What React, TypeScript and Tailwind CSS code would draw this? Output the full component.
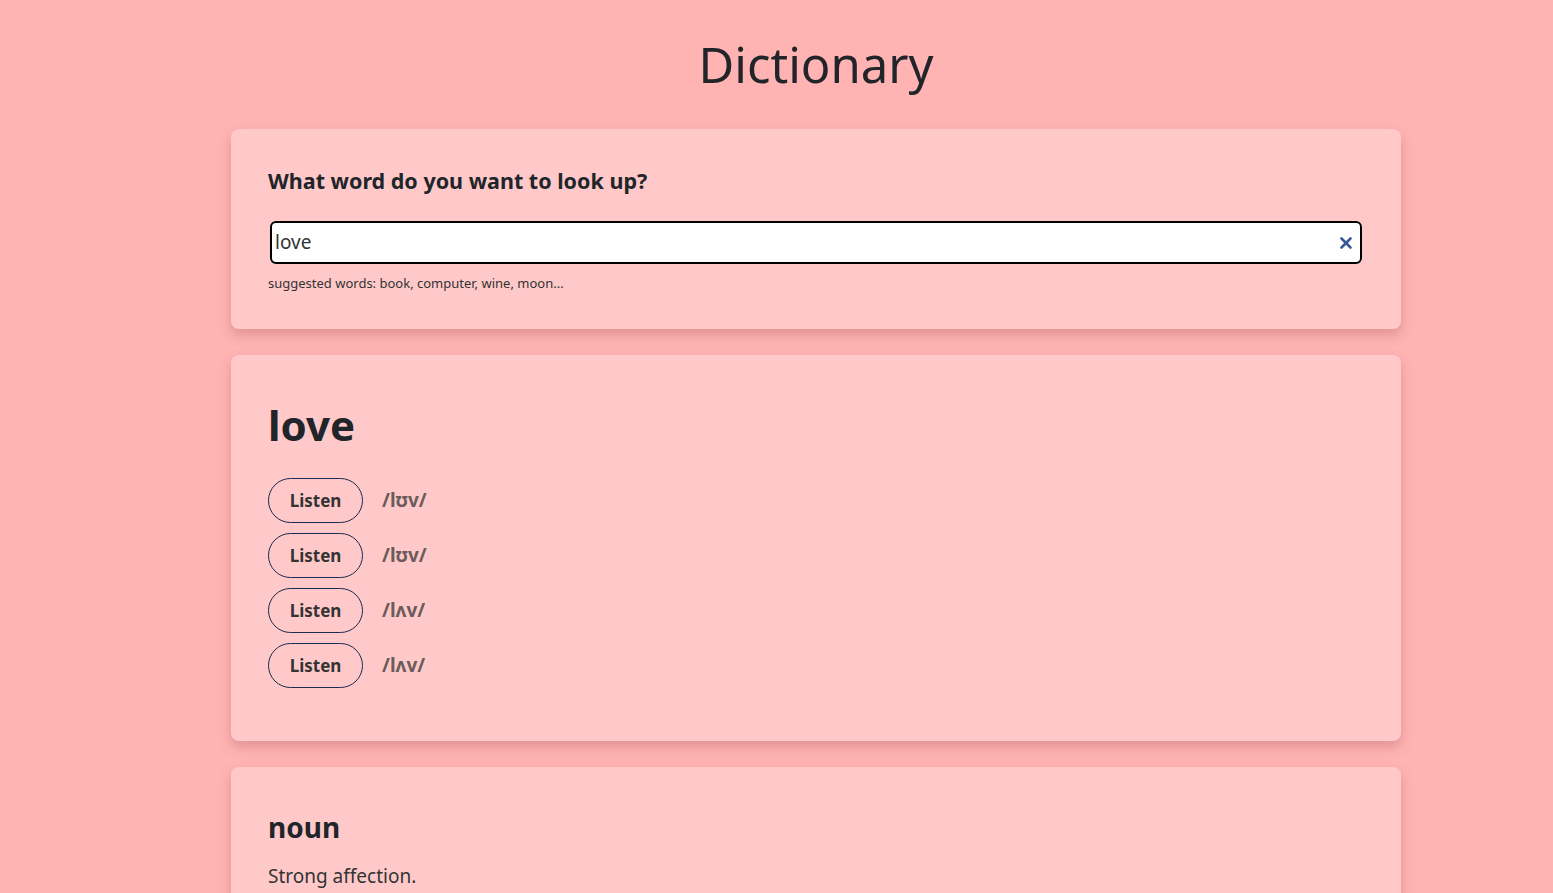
import { X } from "lucide-react";

const phonetics = ["/lʊv/", "/lʊv/", "/lʌv/", "/lʌv/"];

export default function App() {
  return (
    <div className="min-h-screen bg-[#ffb3b3] text-[#212529] font-['Noto_Sans',sans-serif]">
      <h1 className="pt-[28px] pl-[231px] w-[1401px] text-center text-[49px] leading-[72px] font-normal">
        Dictionary
      </h1>
      <div className="ml-[231px] w-[1170px] mt-[29px] flex flex-col gap-[26px] pb-10">
        <section className="rounded-lg bg-[#ffc9c9] shadow-[0_6px_12px_rgba(190,110,110,0.45)] px-[37px] pt-[37px] pb-[36px]">
          <h2 className="text-[21.5px] font-bold leading-[30px]">What word do you want to look up?</h2>
          <div className="mt-[25px] mx-[2px] flex items-center h-[43px] rounded-md border-2 border-black bg-white pl-[3px] pr-[5px]">
            <input
              defaultValue="love"
              className="flex-1 bg-transparent outline-none text-[19px] text-[#333]"
            />
            <X className="text-[#3a5795]" size={18} strokeWidth={3.5} />
          </div>
          <p className="mt-[9px] text-[13px] leading-[20px] text-[#333]">
            suggested words: book, computer, wine, moon...
          </p>
        </section>

        <section className="rounded-lg bg-[#ffc9c9] shadow-[0_6px_12px_rgba(190,110,110,0.45)] px-[37px] pt-[40px] pb-[53px]">
          <h2 className="text-[42px] font-bold leading-[60px]">love</h2>
          <div className="mt-[23px] flex flex-col gap-[10px]">
            {phonetics.map((p, i) => (
              <div key={i} className="flex items-center gap-[19px]">
                <button className="w-[95px] h-[45px] rounded-full border border-[#1c2b4f] text-[17px] font-bold text-[#333]">
                  Listen
                </button>
                <span className="text-[19px] font-bold text-[#6b5b5b]">{p}</span>
              </div>
            ))}
          </div>
        </section>

        <section className="rounded-lg bg-[#ffc9c9] shadow-[0_6px_12px_rgba(190,110,110,0.45)] px-[37px] pt-[42px] pb-[40px]">
          <h3 className="text-[28px] font-bold leading-[36px]">noun</h3>
          <p className="mt-[16px] text-[19px] leading-[30px] text-[#333]">Strong affection.</p>
        </section>
      </div>
    </div>
  );
}
